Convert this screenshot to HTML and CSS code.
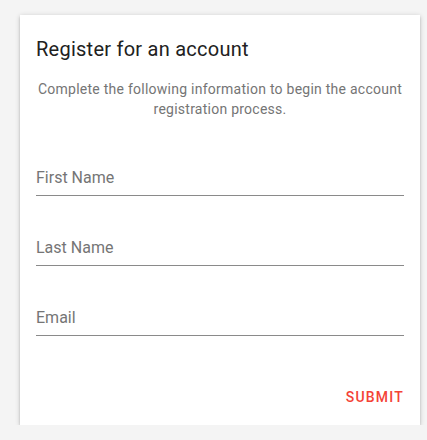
FILE: index.html
```html
<!DOCTYPE html>
<html>
<head>
<meta charset="utf-8">
<link rel="stylesheet" href="styles.css">
</head>
<body>
<div class="card">
  <h1 class="title">Register for an account</h1>
  <p class="desc">Complete the following information to begin the account registration process.</p>
  <div class="field"><span class="label">First Name</span></div>
  <div class="field"><span class="label">Last Name</span></div>
  <div class="field"><span class="label">Email</span></div>
  <div class="actions"><button class="submit">SUBMIT</button></div>
</div>
</body>
</html>
```
FILE: styles.css
```css
html, body {
  margin: 0;
  padding: 0;
  background: #f4f4f4;
  font-family: Roboto, "Liberation Sans", sans-serif;
}
body {
  padding: 15px 7px 0 20px;
}
.card {
  width: 400px;
  box-sizing: border-box;
  background: #fff;
  padding: 20px 16px 0 16px;
  height: 410px;
  box-shadow: 0 2px 2px rgba(0,0,0,0.14), 0 3px 1px -2px rgba(0,0,0,0.12), 0 1px 5px rgba(0,0,0,0.2);
  display: flex;
  flex-direction: column;
}
.title {
  margin: 0;
  font-size: 20px;
  font-weight: 400;
  letter-spacing: 0.25px;
  line-height: 28px;
  color: #212121;
}
.desc {
  margin: 16px 0 0 0;
  font-size: 14px;
  letter-spacing: 0.25px;
  line-height: 20px;
  color: #757575;
  text-align: center;
}
.field {
  margin-top: 29px;
  height: 48px;
  border-bottom: 1px solid #8a8a8a;
  display: flex;
  align-items: flex-end;
  padding-bottom: 7px;
  box-sizing: border-box;
}
.field + .field {
  margin-top: 22px;
}
.label {
  font-size: 16px;
  color: #757575;
  line-height: 20px;
}
.actions {
  display: flex;
  justify-content: flex-end;
  margin-top: 53px;
}
.submit {
  border: 0;
  background: none;
  padding: 0;
  margin-right: 0;
  font-family: Roboto, "Liberation Sans", sans-serif;
  font-size: 14px;
  font-weight: 500;
  letter-spacing: 1.2px;
  color: #f44336;
}
```
